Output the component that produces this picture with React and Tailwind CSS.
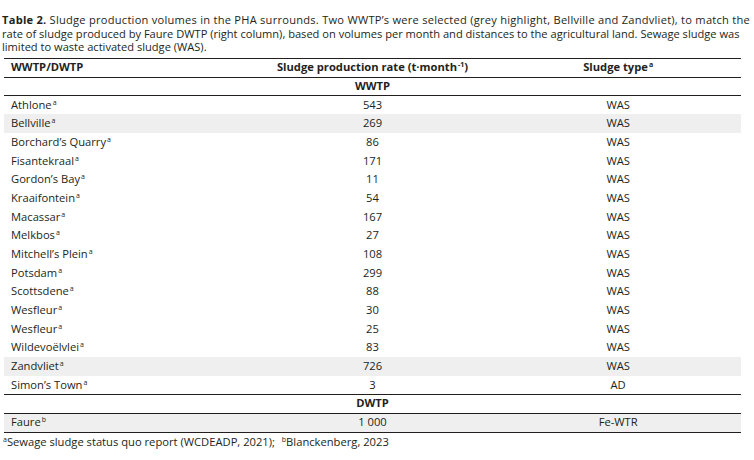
import React from 'react';

const rows = [
  { name: 'Athlone', rate: '543', type: 'WAS' },
  { name: 'Bellville', rate: '269', type: 'WAS', grey: true },
  { name: 'Borchard’s Quarry', rate: '86', type: 'WAS' },
  { name: 'Fisantekraal', rate: '171', type: 'WAS' },
  { name: 'Gordon’s Bay', rate: '11', type: 'WAS' },
  { name: 'Kraaifontein', rate: '54', type: 'WAS' },
  { name: 'Macassar', rate: '167', type: 'WAS' },
  { name: 'Melkbos', rate: '27', type: 'WAS' },
  { name: 'Mitchell’s Plein', rate: '108', type: 'WAS' },
  { name: 'Potsdam', rate: '299', type: 'WAS' },
  { name: 'Scottsdene', rate: '88', type: 'WAS' },
  { name: 'Wesfleur', rate: '30', type: 'WAS' },
  { name: 'Wesfleur', rate: '25', type: 'WAS' },
  { name: 'Wildevoëlvlei', rate: '83', type: 'WAS' },
  { name: 'Zandvliet', rate: '726', type: 'WAS', grey: true },
  { name: 'Simon’s Town', rate: '3', type: 'AD' },
];

const Sup = ({ children }) => (
  <sup className="text-[7px] relative top-[-4px] align-baseline ml-[1px]">{children}</sup>
);

const DataRow = ({ name, note, rate, type, grey }) => (
  <tr className={`h-[18.7px] ${grey ? 'bg-[#efefef]' : ''}`}>
    <td className="pl-[7px] text-left">
      {name}
      <Sup>{note}</Sup>
    </td>
    <td className="text-center">{rate}</td>
    <td className="text-center">{type}</td>
  </tr>
);

const SectionRow = ({ label }) => (
  <tr className="h-[18.5px] border-b border-[#231f20]">
    <td colSpan={3} className="text-center font-bold">{label}</td>
  </tr>
);

export default function App() {
  return (
    <div
      className="w-[754px] h-[460px] bg-white text-[#231f20] text-[11.2px]"
      style={{ fontFamily: '"Open Sans", "Noto Sans", sans-serif' }}
    >
      <div className="px-[2px] pt-[13px] text-[11.1px] leading-[13.5px] whitespace-nowrap">
        <p className="tracking-[0.25px]">
          <span className="font-bold">Table 2.</span> Sludge production volumes in the PHA surrounds. Two WWTP’s were
          selected (grey highlight, Bellville and Zandvliet), to match the
        </p>
        <p>
          rate of sludge produced by Faure DWTP (right column), based on volumes per month and distances to the
          agricultural land. Sewage sludge was
        </p>
        <p>limited to waste activated sludge (WAS).</p>
      </div>

      <table className="ml-[4px] mt-[4px] w-[737px] border-collapse table-fixed">
        <thead>
          <tr className="h-[19px] border-t border-b border-[#231f20] font-bold">
            <th className="pl-[7px] text-left font-bold">WWTP/DWTP</th>
            <th className="text-center font-bold">
              Sludge production rate (t·month<Sup>-1</Sup>)
            </th>
            <th className="text-center font-bold">
              Sludge type<Sup>a</Sup>
            </th>
          </tr>
        </thead>
        <tbody>
          <SectionRow label="WWTP" />
          {rows.map((r, i) => (
            <DataRow key={i} {...r} note="a" />
          ))}
          <tr className="border-t border-[#231f20]" />
          <SectionRow label="DWTP" />
          <tr className="h-[19px] bg-[#efefef] border-b border-[#231f20]">
            <td className="pl-[7px] text-left">
              Faure<Sup>b</Sup>
            </td>
            <td className="text-center">1 000</td>
            <td className="text-center">Fe-WTR</td>
          </tr>
        </tbody>
      </table>

      <p className="px-[2px] mt-[2px] leading-[14px]">
        <Sup>a</Sup>Sewage sludge status quo report (WCDEADP, 2021);&nbsp; <Sup>b</Sup>Blanckenberg, 2023
      </p>
    </div>
  );
}
